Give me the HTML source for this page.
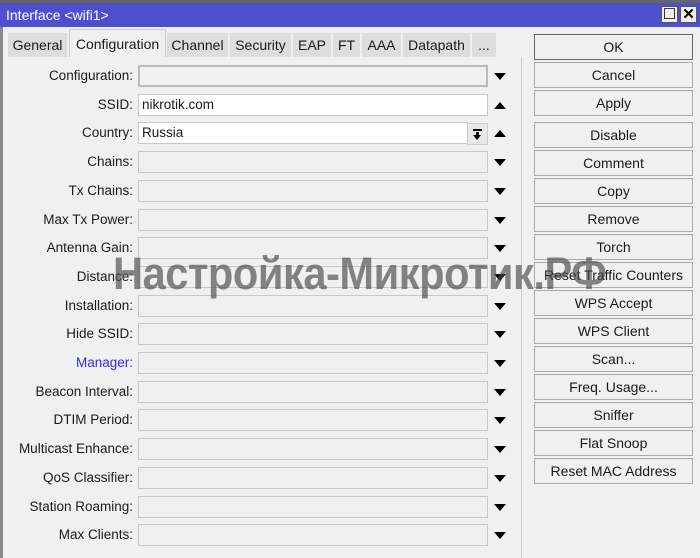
<!DOCTYPE html><html><head><style>
body{margin:0;width:700px;height:558px;background:#f0f0f0;font-family:"Liberation Sans",sans-serif;font-size:13.5px;color:#1a1a1a;position:relative;overflow:hidden}
.a{position:absolute}
.title{left:0;top:0;width:700px;height:27px;background:#4e4fcc;border-top:3px solid #666;box-sizing:border-box;color:#fff;font-size:14px;line-height:24px;padding-left:6px}
.wb{top:6px;width:17px;height:17px;background:#eee;border:1px solid #555;box-sizing:border-box;color:#000;text-align:center;line-height:15px;font-size:15px}
.lb{left:0;top:27px;width:3px;height:531px;background:#888}
.tab{top:33px;height:24px;background:#ddd;line-height:24px;text-align:center;font-size:14px;border-right:2px solid #f0f0f0;box-sizing:border-box}
.tab.on{background:#f0f0f0;top:29px;height:28px;line-height:28px;border:1px solid #ccc;border-bottom:none}
.lbl{left:0;width:133px;text-align:right;height:22px;line-height:22px}
.box{left:138px;width:350px;height:22px;background:#f0f0f0;border:1px solid #c8c8c8;box-sizing:border-box;line-height:20px;padding-left:3px}
.arr{left:494px;width:0;height:0;border-left:6px solid transparent;border-right:6px solid transparent}
.dn{border-top:7px solid #000}
.up{border-bottom:7px solid #000}
.btn{left:534px;width:159px;height:26px;border:1px solid #aaa;box-sizing:border-box;background:#f0f0f0;text-align:center;line-height:24px;font-size:14px}
.sep{left:521px;top:57px;width:1px;height:501px;background:#ccc}
.wm{left:113px;top:248px;font-size:45px;font-weight:bold;color:rgba(70,70,70,.65);white-space:nowrap;letter-spacing:-0.5px;transform:scaleX(0.925);transform-origin:left top}
</style></head><body>
<div class="a title">Interface &lt;wifi1&gt;</div>
<div class="a wb" style="left:661px">☐</div>
<div class="a wb" style="left:680px;font-weight:bold">✕</div>
<div class="a lb"></div>
<div class="a tab" style="left:8px;width:61px">General</div>
<div class="a tab on" style="left:69px;width:97px">Configuration</div>
<div class="a tab" style="left:167px;width:63px">Channel</div>
<div class="a tab" style="left:230px;width:63px">Security</div>
<div class="a tab" style="left:293px;width:40px">EAP</div>
<div class="a tab" style="left:333px;width:29px">FT</div>
<div class="a tab" style="left:362px;width:41px">AAA</div>
<div class="a tab" style="left:403px;width:69px">Datapath</div>
<div class="a tab" style="left:472px;width:26px">...</div>
<div class="a sep"></div>
<div id="f"></div>
<div class="a btn" style="top:34px;border-color:#666">OK</div>
<script>
var L=["Configuration:","SSID:","Country:","Chains:","Tx Chains:","Max Tx Power:","Antenna Gain:","Distance:","Installation:","Hide SSID:","Manager:","Beacon Interval:","DTIM Period:","Multicast Enhance:","QoS Classifier:","Station Roaming:","Max Clients:"],h="";
L.forEach(function(t,i){var y=Math.round(65+i*28.7);
h+='<div class="a lbl" style="top:'+y+'px;'+(i==10?'color:#2b2bf0':'')+'">'+t+'</div>';
var s='top:'+y+'px;',v='';
if(i==0)s+='border:2px solid #bbb;';
if(i==1){s+='background:#fff;';v='nikrotik.com'}
if(i==2){s+='background:#fff;width:330px;';v='Russia'}
h+='<div class="a box" style="'+s+'">'+v+'</div>';
var up=(i==1||i==2);
h+='<div class="a arr '+(up?'up':'dn')+'" style="top:'+(y+8)+'px"></div>';});
h+='<div class="a" style="left:467px;top:123px;width:21px;height:22px;background:#e8e8e8;border:1px solid #ccc;box-sizing:border-box"><div class="a" style="left:5px;top:5px;width:9px;height:2px;background:#000"></div><div class="a" style="left:8px;top:8px;width:3px;height:3px;background:#000"></div><div class="a" style="left:5px;top:11px;width:0;height:0;border-left:4.5px solid transparent;border-right:4.5px solid transparent;border-top:5px solid #000"></div></div>';
var B=[["Cancel",62],["Apply",90],["Disable",122],["Comment",150],["Copy",178],["Remove",206],["Torch",234],["Reset Traffic Counters",262],["WPS Accept",290],["WPS Client",318],["Scan...",346],["Freq. Usage...",374],["Sniffer",402],["Flat Snoop",430],["Reset MAC Address",458]];
B.forEach(function(b){h+='<div class="a btn" style="top:'+b[1]+'px">'+b[0]+'</div>'});
document.getElementById('f').innerHTML=h;
</script>
<div class="a wm">Настройка-Микротик.РФ</div>
</body></html>
